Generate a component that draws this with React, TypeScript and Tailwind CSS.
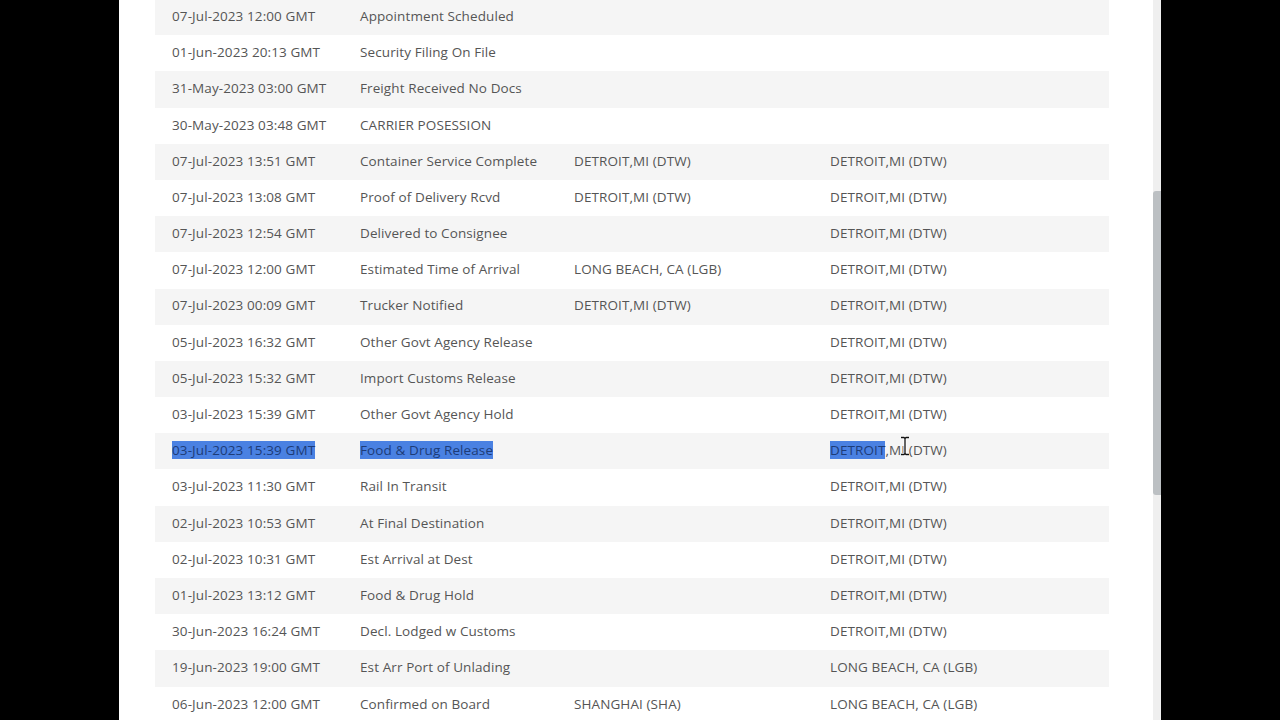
import React from 'react';

type Row = {
  date: string;
  event: string;
  origin?: string;
  dest?: string;
  selected?: boolean;
};

const ROWS: Row[] = [
  { date: '07-Jul-2023 12:00 GMT', event: 'Appointment Scheduled' },
  { date: '01-Jun-2023 20:13 GMT', event: 'Security Filing On File' },
  { date: '31-May-2023 03:00 GMT', event: 'Freight Received No Docs' },
  { date: '30-May-2023 03:48 GMT', event: 'CARRIER POSESSION' },
  { date: '07-Jul-2023 13:51 GMT', event: 'Container Service Complete', origin: 'DETROIT,MI (DTW)', dest: 'DETROIT,MI (DTW)' },
  { date: '07-Jul-2023 13:08 GMT', event: 'Proof of Delivery Rcvd', origin: 'DETROIT,MI (DTW)', dest: 'DETROIT,MI (DTW)' },
  { date: '07-Jul-2023 12:54 GMT', event: 'Delivered to Consignee', dest: 'DETROIT,MI (DTW)' },
  { date: '07-Jul-2023 12:00 GMT', event: 'Estimated Time of Arrival', origin: 'LONG BEACH, CA (LGB)', dest: 'DETROIT,MI (DTW)' },
  { date: '07-Jul-2023 00:09 GMT', event: 'Trucker Notified', origin: 'DETROIT,MI (DTW)', dest: 'DETROIT,MI (DTW)' },
  { date: '05-Jul-2023 16:32 GMT', event: 'Other Govt Agency Release', dest: 'DETROIT,MI (DTW)' },
  { date: '05-Jul-2023 15:32 GMT', event: 'Import Customs Release', dest: 'DETROIT,MI (DTW)' },
  { date: '03-Jul-2023 15:39 GMT', event: 'Other Govt Agency Hold', dest: 'DETROIT,MI (DTW)' },
  { date: '03-Jul-2023 15:39 GMT', event: 'Food & Drug Release', dest: 'DETROIT,MI (DTW)', selected: true },
  { date: '03-Jul-2023 11:30 GMT', event: 'Rail In Transit', dest: 'DETROIT,MI (DTW)' },
  { date: '02-Jul-2023 10:53 GMT', event: 'At Final Destination', dest: 'DETROIT,MI (DTW)' },
  { date: '02-Jul-2023 10:31 GMT', event: 'Est Arrival at Dest', dest: 'DETROIT,MI (DTW)' },
  { date: '01-Jul-2023 13:12 GMT', event: 'Food & Drug Hold', dest: 'DETROIT,MI (DTW)' },
  { date: '30-Jun-2023 16:24 GMT', event: 'Decl. Lodged w Customs', dest: 'DETROIT,MI (DTW)' },
  { date: '19-Jun-2023 19:00 GMT', event: 'Est Arr Port of Unlading', dest: 'LONG BEACH, CA (LGB)' },
  { date: '06-Jun-2023 12:00 GMT', event: 'Confirmed on Board', origin: 'SHANGHAI (SHA)', dest: 'LONG BEACH, CA (LGB)' },
];

const Sel: React.FC<{ children: React.ReactNode }> = ({ children }) => (
  <span className="bg-[#4a81e2] text-[#1d3c78]">{children}</span>
);

const IBeam = () => (
  <svg width="10" height="20" viewBox="0 0 10 20" className="absolute left-[900px] top-[436px]">
    <path d="M1 1.5h3l1 1 1-1h3M5 2.5v15M1 18.5h3l1-1 1 1h3" fill="none" stroke="#fff" strokeWidth="3" />
    <path d="M1 1.5h3l1 1 1-1h3M5 2.5v15M1 18.5h3l1-1 1 1h3" fill="none" stroke="#111" strokeWidth="1.3" />
  </svg>
);

export default function App() {
  return (
    <div className="relative flex h-[720px] w-[1280px] overflow-hidden bg-black">
      <div className="w-[119px] shrink-0" />
      <div className="w-[1034px] shrink-0 bg-white pl-[36px]">
        <div
          className="-mt-[1px] w-[954px] text-[13.5px] tracking-[0.1px] text-[#555]"
          style={{ fontFamily: '"Open Sans", "Liberation Sans", sans-serif' }}
        >
          {ROWS.map((r, i) => (
            <div
              key={i}
              className={`grid h-[36.2px] grid-cols-[188px_214px_256px_1fr] items-center pb-[2px] pl-[17px] ${
                i % 2 === 0 ? 'bg-[#f5f5f5]' : 'bg-white'
              }`}
            >
              <div>{r.selected ? <Sel>{r.date}</Sel> : r.date}</div>
              <div>{r.selected ? <Sel>{r.event}</Sel> : r.event}</div>
              <div>{r.origin ?? ''}</div>
              <div>
                {r.selected ? (
                  <>
                    <Sel>DETROIT</Sel>,MI (DTW)
                  </>
                ) : (
                  r.dest ?? ''
                )}
              </div>
            </div>
          ))}
        </div>
      </div>
      <div className="flex w-[8px] shrink-0 flex-col bg-[#efefef] pt-[191px]">
        <div className="h-[304px] w-full rounded-l-[3px] bg-[#bcc0c3]" />
      </div>
      <div className="flex-1" />
      <IBeam />
    </div>
  );
}
